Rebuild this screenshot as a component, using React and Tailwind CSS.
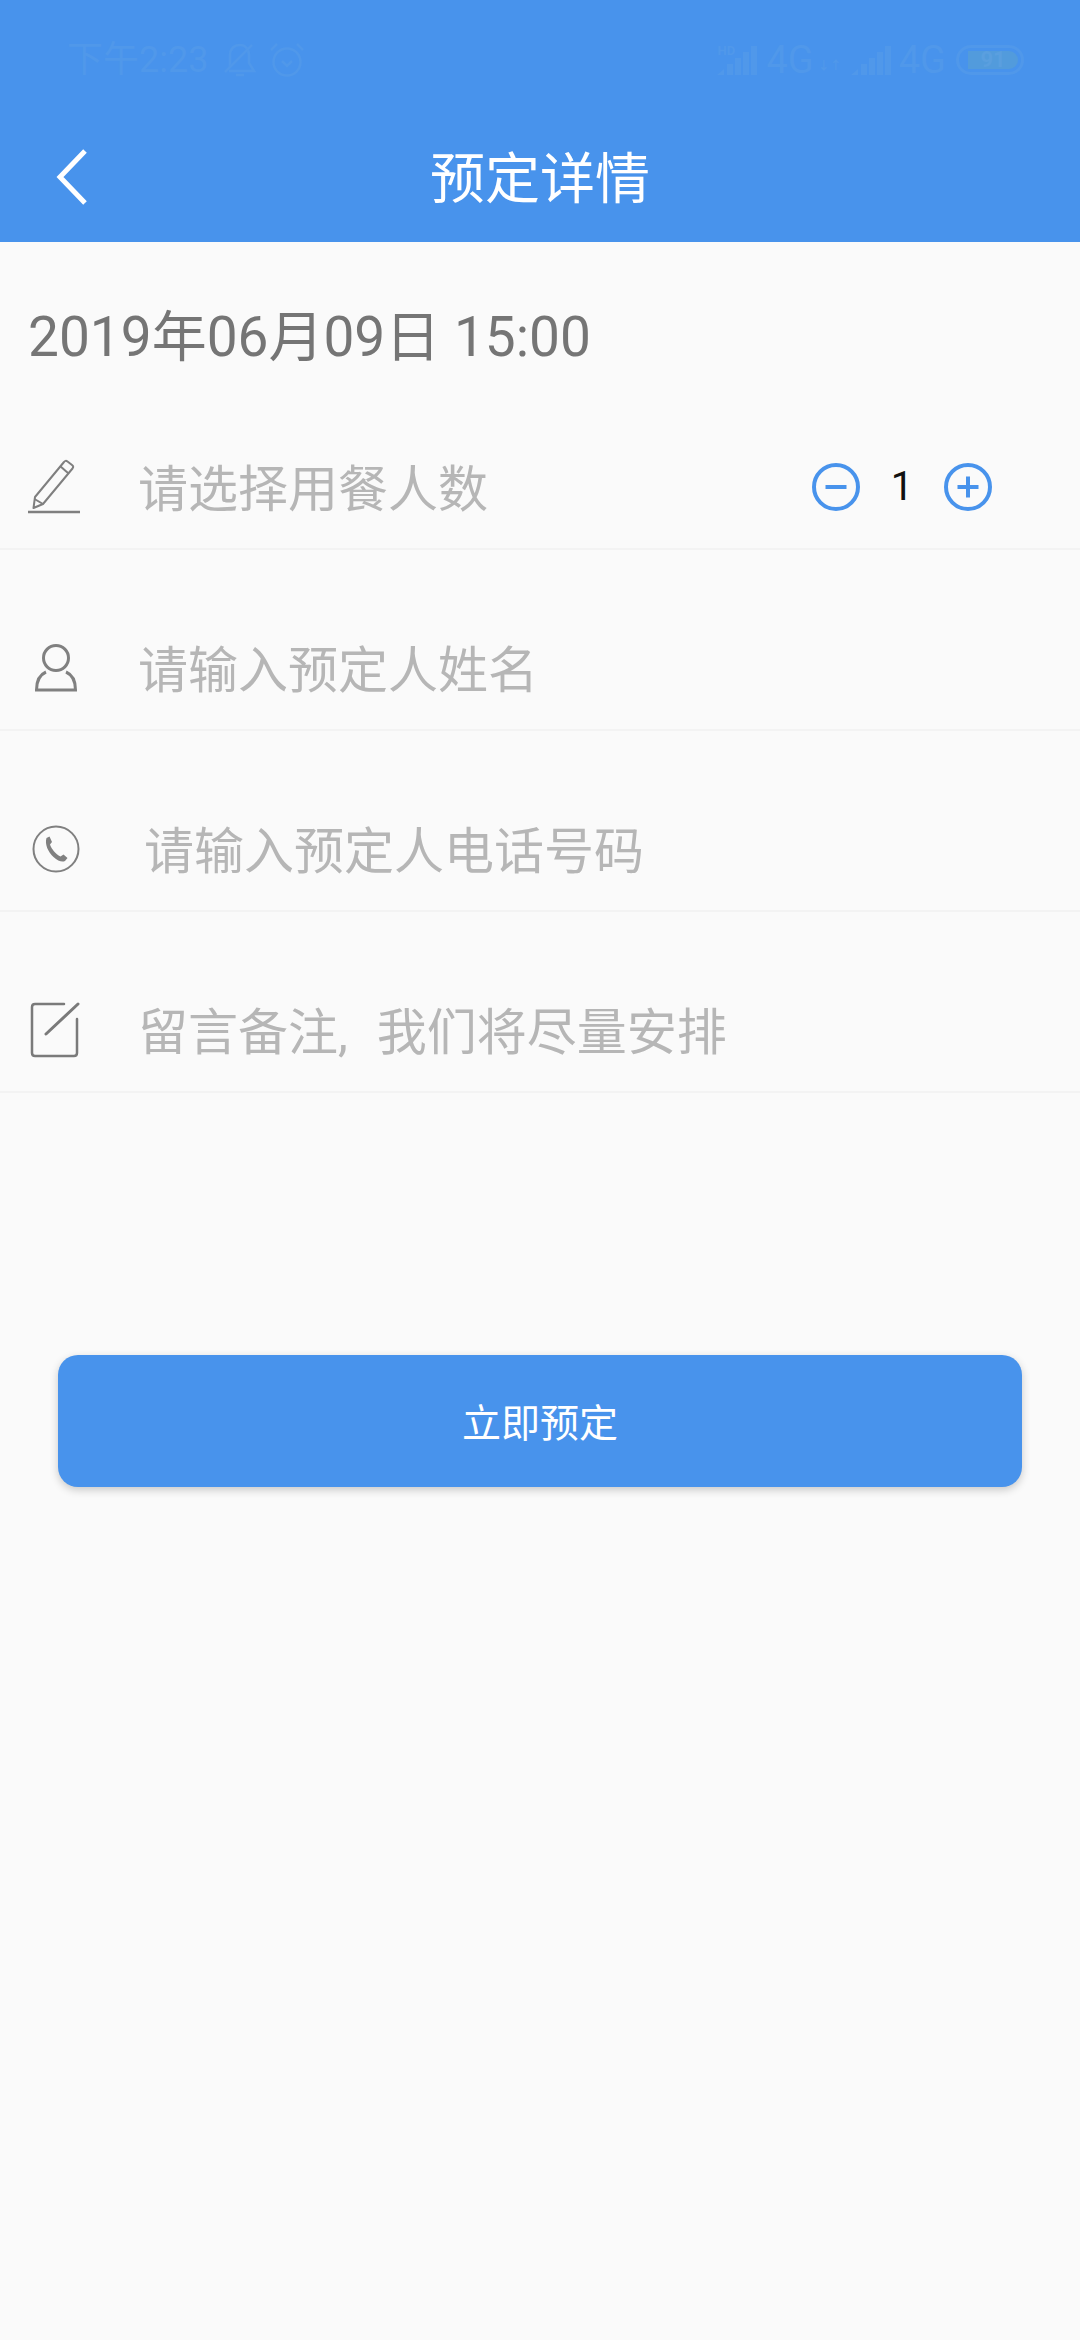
import { useState } from "react";

const font = "font-['Roboto','Noto_Sans_CJK_SC',sans-serif]";

function PencilIcon() {
  return (
    <svg width="52" height="56" viewBox="0 0 52 56" fill="none" stroke="#7f7f7f" strokeWidth="2">
      <path d="M7 38 L36 3 Q37.5 1 39.5 2.5 L44 6 Q46 7.5 44.5 9.5 L15 45 L5.5 49 Z" strokeLinejoin="round" />
      <path d="M6.5 40 L15 45" />
      <path d="M32 7 L40 14" />
      <path d="M0 53 H52" strokeWidth="2.5" />
    </svg>
  );
}

function PersonIcon() {
  return (
    <svg width="46" height="50" viewBox="0 0 46 50" fill="none" stroke="#808080" strokeWidth="3">
      <circle cx="23" cy="15" r="12.5" />
      <path d="M13 29 C6 32 3.5 39 3.5 47 H42.5 C42.5 39 40 32 33 29" />
    </svg>
  );
}

function PhoneIcon() {
  return (
    <svg width="48" height="48" viewBox="0 0 48 48" fill="none">
      <circle cx="24" cy="24" r="22.5" stroke="#808080" strokeWidth="2" />
      <path
        d="M14.5 13 L17.5 11.5 L20 17 L18 19.5 C19.5 24 23.5 29 28.5 31.5 L31.5 29.5 L35.5 33 L33 36 C30 37.5 26 36 21.5 32 C16 27 12.5 19 14.5 13 Z"
        fill="#808080"
      />
    </svg>
  );
}

function NoteIcon() {
  return (
    <svg width="50" height="56" viewBox="0 0 50 56" fill="none" stroke="#7a7a7a" strokeWidth="2.5" strokeLinecap="round">
      <path d="M34 2 H5 Q2 2 2 5 V51 Q2 54 5 54 H44 Q47 54 47 51 V17" />
      <path d="M16 32 L48 2" strokeWidth="3" />
    </svg>
  );
}

function StepButton({ plus, onClick }) {
  return (
    <button onClick={onClick} className="w-[48px] h-[48px] shrink-0">
      <svg width="48" height="48" viewBox="0 0 48 48" fill="none" stroke="#4893ec" strokeWidth="4">
        <circle cx="24" cy="24" r="22" />
        <path d="M13.5 24 H34.5" />
        {plus && <path d="M24 13.5 V34.5" />}
      </svg>
    </button>
  );
}

function SignalBars({ className }) {
  return (
    <svg className={className} width="40" height="29" viewBox="0 0 40 29" fill="#5098ea">
      <path d="M0 29 L7 23 V29 Z" />
      <rect x="10" y="18" width="6" height="11" />
      <rect x="18" y="12" width="6" height="17" />
      <rect x="26" y="6" width="6" height="23" />
      <rect x="34" y="0" width="6" height="29" />
    </svg>
  );
}

function StatusBar() {
  return (
    <div className="h-[115px] flex items-start justify-between pt-[42px] pl-[67px] pr-[56px] text-[#5098ea]">
      <div className="flex items-center h-[36px]">
        <span className="text-[36px] leading-[36px]">下午2:23</span>
        <svg className="ml-[16px]" width="32" height="34" viewBox="0 0 32 34" fill="none" stroke="#5098ea" strokeWidth="2.5">
          <path d="M6 24 V12 C6 6 10 2 16 2 C21 2 25 6 25 12 V20 L30 28 H5" />
          <path d="M1 29 L28 2" />
          <path d="M12 32 H20" />
        </svg>
        <svg className="ml-[14px]" width="34" height="36" viewBox="0 0 34 36" fill="none" stroke="#5098ea" strokeWidth="2.5">
          <circle cx="17" cy="20" r="13.5" />
          <path d="M12 19 L17 24 L22 19" />
          <path d="M1 8 L7 2 M33 8 L27 2" />
        </svg>
      </div>
      <div className="flex items-center h-[36px]">
        <div className="relative mt-[1px]">
          <span className="absolute left-0 -top-[2px] text-[13px] leading-[13px] font-bold">HD</span>
          <SignalBars />
        </div>
        <span className="ml-[9px] text-[38px] leading-[36px]">4G</span>
        <span className="ml-[4px] mt-[12px] text-[12px] leading-[12px] font-bold">↓↑</span>
        <SignalBars className="ml-[9px]" />
        <span className="ml-[8px] text-[38px] leading-[36px]">4G</span>
        <div className="ml-[10px] w-[68px] h-[30px] rounded-full border-[3px] border-[#5098ea] p-[3px]">
          <div className="h-full w-[50px] ml-[6px] rounded-r-full bg-[#529bdc] flex items-center justify-center text-[22px] leading-none font-bold text-[#5a9fdf]">
            91
          </div>
        </div>
      </div>
    </div>
  );
}

function FormRow({ icon, label, indent = "pl-[138px]", children }) {
  return (
    <div className="h-[181px] border-b-2 border-[#f3f3f3] flex items-end pb-[29px]">
      <div className="relative flex items-center w-full h-[64px]">
        {icon}
        <span className={`absolute left-0 top-[3px] ${indent} text-[50px] leading-[64px] text-[#b6b6b6] whitespace-nowrap`}>{label}</span>
        {children}
      </div>
    </div>
  );
}

export default function App() {
  const [count, setCount] = useState(1);

  return (
    <div className={`min-h-[2340px] bg-[#fafafa] ${font}`}>
      <header className="h-[242px] bg-[#4893ec]">
        <StatusBar />
        <div className="relative flex items-center justify-center h-[127px]">
          <svg className="absolute left-[56px] top-[34px]" width="32" height="56" viewBox="0 0 32 56" fill="none" stroke="#fff" strokeWidth="5">
            <path d="M29 2 L4 28 L29 54" />
          </svg>
          <h1 className="text-[55px] leading-[64px] text-white font-normal">预定详情</h1>
        </div>
      </header>

      <div className="h-[127px] pt-[63px] pl-[28px] text-[55px] leading-[64px] text-[#757575]">2019年06月09日 15:00</div>

      <FormRow icon={<div className="ml-[28px]"><PencilIcon /></div>} label="请选择用餐人数">
        <div className="absolute left-[812px] top-[8px] flex items-center">
          <StepButton onClick={() => setCount((c) => Math.max(1, c - 1))} />
          <span className="w-[84px] text-center text-[40px] leading-[48px] text-[#111]">{count}</span>
          <StepButton plus onClick={() => setCount((c) => c + 1)} />
        </div>
      </FormRow>
      <FormRow icon={<div className="ml-[33px]"><PersonIcon /></div>} label="请输入预定人姓名" />
      <FormRow icon={<div className="ml-[32px]"><PhoneIcon /></div>} label="请输入预定人电话号码" indent="pl-[144px]" />
      <FormRow
        icon={<div className="ml-[30px]"><NoteIcon /></div>}
        label={<>留言备注,<span className="ml-[29px]">我们将尽量安排</span></>}
      />

      <button className="block mt-[262px] mx-[58px] w-[964px] h-[132px] pt-[5px] rounded-[20px] bg-[#4893ec] text-[39px] leading-[48px] text-white shadow-[0_3px_8px_rgba(0,0,0,0.2)]">
        立即预定
      </button>
    </div>
  );
}
